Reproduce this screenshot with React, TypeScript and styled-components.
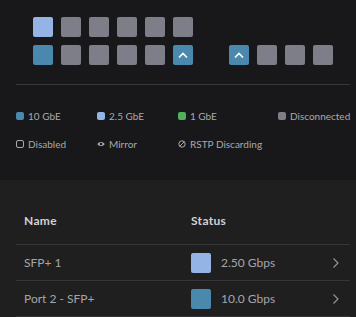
import React from "react";
import styled, { createGlobalStyle } from "styled-components";

const Global = createGlobalStyle`
  html, body { margin: 0; padding: 0; background: #18181a; }
  body { font-family: Lato, "Open Sans", sans-serif; }
`;

const Page = styled.div`
  width: 356px;
  height: 317px;
  overflow: hidden;
  background: #18181a;
  display: flex;
  flex-direction: column;
`;

const Top = styled.div`
  padding: 17px 6px 0 16px;
  height: 165px;
`;

const PortArea = styled.div`
  display: flex;
  gap: 36px;
  padding-left: 17px;
`;

const PortGrid = styled.div<{ $cols: number }>`
  display: grid;
  grid-template-columns: repeat(${(p) => p.$cols}, 20px);
  grid-auto-rows: 20px;
  gap: 8px;
`;

const colors: Record<string, string> = {
  g25: "#94b4e6",
  g10: "#4a88ad",
  off: "#7d7e87",
  g1: "#53b05a",
};

const Port = styled.div<{ $c: string; $hidden?: boolean }>`
  width: 20px;
  height: 20px;
  border-radius: 2px;
  background: ${(p) => colors[p.$c]};
  visibility: ${(p) => (p.$hidden ? "hidden" : "visible")};
  display: flex;
  align-items: center;
  justify-content: center;
`;

const Divider = styled.div`
  height: 1px;
  background: #38383b;
  margin: 19px 0 0 0;
  width: 334px;
`;

const Legend = styled.div`
  display: grid;
  grid-template-columns: 81px 81px 100px auto;
  row-gap: 14px;
  margin-top: 24px;
`;

const LegendItem = styled.div`
  display: flex;
  align-items: center;
  gap: 4px;
  height: 14px;
  font-size: 10px;
  color: #a9a9ad;
  white-space: nowrap;
`;

const Dot = styled.span<{ $c: string }>`
  width: 8px;
  height: 8px;
  border-radius: 2px;
  background: ${(p) => colors[p.$c]};
  flex: none;
`;

const Bottom = styled.div`
  flex: 1;
  background: #1f1f20;
  padding: 0 6px 0 16px;
`;

const Row = styled.div<{ $head?: boolean }>`
  display: grid;
  grid-template-columns: 167px 1fr 20px;
  align-items: center;
  height: ${(p) => (p.$head ? "65px" : "36px")};
  padding-top: ${(p) => (p.$head ? "17px" : "0")};
  box-sizing: border-box;
  border-bottom: 1px solid #363638;
  font-size: 12px;
  color: ${(p) => (p.$head ? "#d2d2d4" : "#a6a6aa")};
  font-weight: ${(p) => (p.$head ? 700 : 400)};
  letter-spacing: ${(p) => (p.$head ? "0.3px" : "0")};
`;

const Cell = styled.div`
  padding-left: 8px;
  display: flex;
  align-items: center;
  gap: 10px;
`;

const Swatch = styled.span<{ $c: string }>`
  width: 20px;
  height: 20px;
  border-radius: 2px;
  background: ${(p) => colors[p.$c]};
`;

const Chevron = styled.div`
  display: flex;
  align-items: center;
  padding-left: 2px;
`;

const Up = () => (
  <svg width="12" height="8" viewBox="0 0 12 8">
    <path d="M2 6.5 L6 2.5 L10 6.5" fill="none" stroke="#fff" strokeWidth="1.6" />
  </svg>
);

const Right = () => (
  <svg width="8" height="12" viewBox="0 0 8 12">
    <path d="M1.5 1.5 L6 6 L1.5 10.5" fill="none" stroke="#9a9aa0" strokeWidth="1.1" />
  </svg>
);

const row1 = ["g25", "off", "off", "off", "off", "off"];
const row2 = ["g10", "off", "off", "off", "off", "g10"];

export default function App() {
  return (
    <Page>
      <Global />
      <Top>
        <PortArea>
          <PortGrid $cols={6}>
            {row1.map((c, i) => (
              <Port key={"a" + i} $c={c} />
            ))}
            {row2.map((c, i) => (
              <Port key={"b" + i} $c={c}>
                {i === 5 && <Up />}
              </Port>
            ))}
          </PortGrid>
          <PortGrid $cols={4}>
            {[0, 1, 2, 3].map((i) => (
              <Port key={"h" + i} $c="off" $hidden />
            ))}
            <Port $c="g10">
              <Up />
            </Port>
            <Port $c="off" />
            <Port $c="off" />
            <Port $c="off" />
          </PortGrid>
        </PortArea>
        <Divider />
        <Legend>
          <LegendItem>
            <Dot $c="g10" />
            10 GbE
          </LegendItem>
          <LegendItem>
            <Dot $c="g25" />
            2.5 GbE
          </LegendItem>
          <LegendItem>
            <Dot $c="g1" />1 GbE
          </LegendItem>
          <LegendItem>
            <Dot $c="off" />
            Disconnected
          </LegendItem>
          <LegendItem>
            <svg width="8" height="8" viewBox="0 0 8 8">
              <rect x="0.5" y="0.5" width="7" height="7" rx="1.5" fill="none" stroke="#a9a9ad" />
            </svg>
            Disabled
          </LegendItem>
          <LegendItem>
            <svg width="8" height="8" viewBox="0 0 8 8">
              <path d="M0.3 4 C1.8 1.3 6.2 1.3 7.7 4 C6.2 6.7 1.8 6.7 0.3 4 Z" fill="#a9a9ad" />
              <circle cx="4" cy="4" r="1.3" fill="#18181a" />
            </svg>
            Mirror
          </LegendItem>
          <LegendItem>
            <svg width="8" height="8" viewBox="0 0 8 8">
              <circle cx="4" cy="4" r="3.2" fill="none" stroke="#a9a9ad" strokeWidth="1" />
              <path d="M1.8 6.2 L6.2 1.8" stroke="#a9a9ad" strokeWidth="1" />
            </svg>
            RSTP Discarding
          </LegendItem>
        </Legend>
      </Top>
      <Bottom>
        <Row $head>
          <Cell>Name</Cell>
          <Cell>Status</Cell>
          <span />
        </Row>
        <Row>
          <Cell>SFP+ 1</Cell>
          <Cell>
            <Swatch $c="g25" />
            2.50 Gbps
          </Cell>
          <Chevron>
            <Right />
          </Chevron>
        </Row>
        <Row>
          <Cell>Port 2 - SFP+</Cell>
          <Cell>
            <Swatch $c="g10" />
            10.0 Gbps
          </Cell>
          <Chevron>
            <Right />
          </Chevron>
        </Row>
      </Bottom>
    </Page>
  );
}
